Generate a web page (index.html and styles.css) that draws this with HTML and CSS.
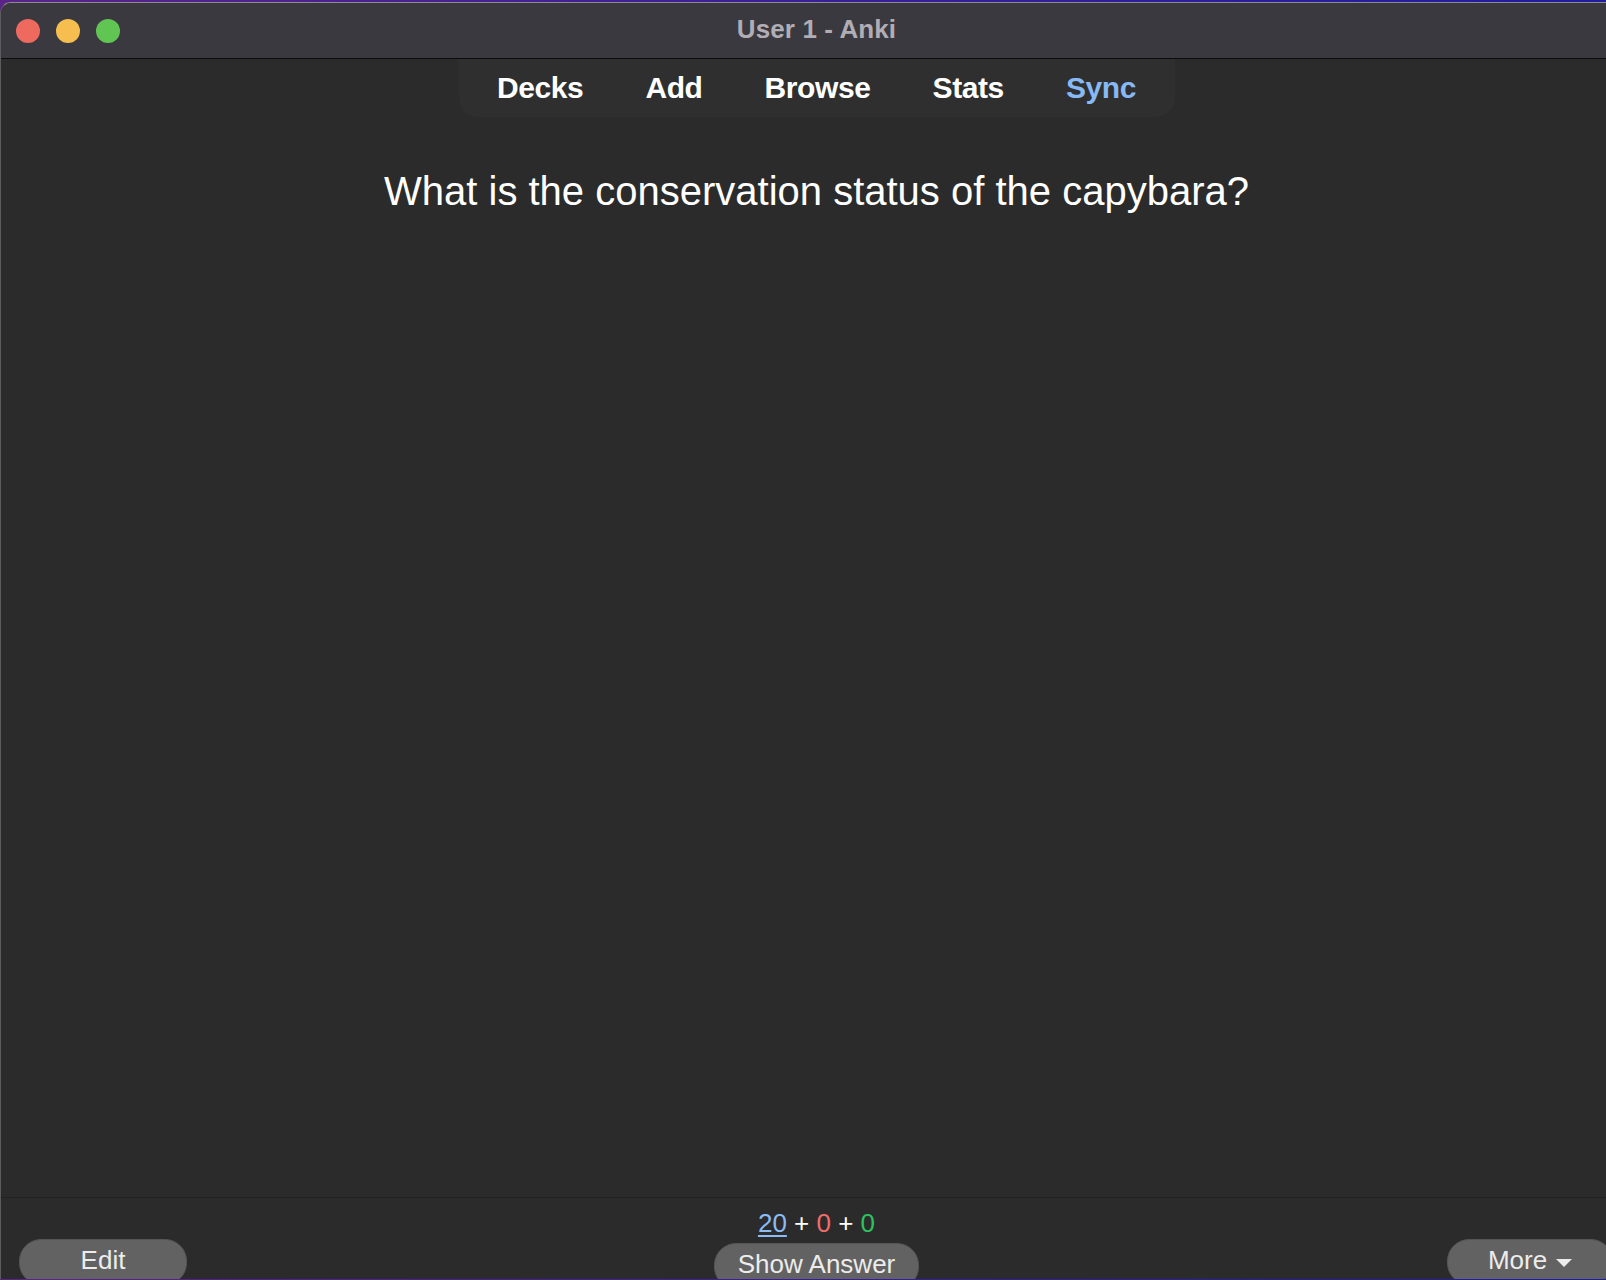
FILE: index.html
```html
<!DOCTYPE html>
<html lang="en">
<head>
<meta charset="utf-8">
<title>User 1 - Anki</title>
<link rel="stylesheet" href="styles.css">
</head>
<body>
<div class="window">
  <header class="titlebar">
    <div class="lights">
      <span class="light red"></span>
      <span class="light yellow"></span>
      <span class="light green"></span>
    </div>
    <div class="title">User 1 - Anki</div>
    <div class="spacer"></div>
  </header>
  <main class="main">
    <nav class="toolbar">
      <a class="tb-item">Decks</a>
      <a class="tb-item">Add</a>
      <a class="tb-item">Browse</a>
      <a class="tb-item">Stats</a>
      <a class="tb-item sync">Sync</a>
    </nav>
    <div class="card">What is the conservation status of the capybara?</div>
  </main>
  <footer class="bottombar">
    <div class="left">
      <button class="btn edit">Edit</button>
    </div>
    <div class="center">
      <div class="counts"><span class="new">20</span> + <span class="learn">0</span> + <span class="review">0</span></div>
      <button class="btn answer">Show Answer</button>
    </div>
    <div class="right">
      <button class="btn more">More <span class="caret"></span></button>
    </div>
  </footer>
</div>
</body>
</html>
```
FILE: styles.css
```css
html, body {
  margin: 0;
  padding: 0;
  height: 1280px;
  overflow: hidden;
}
body {
  background: linear-gradient(90deg, #5a2388 0%, #3a1f96 50%, #1f1c9e 100%);
  font-family: "Liberation Sans", Arial, sans-serif;
}
.window {
  width: 1632px;
  height: 1277px;
  margin-top: 2px;
  border-top: 1px solid #8c8b90;
  border-left: 1px solid #5c5c5f;
  border-radius: 11px 11px 0 0;
  overflow: hidden;
  display: flex;
  flex-direction: column;
  background: #2b2b2b;
  box-sizing: border-box;
}
.titlebar {
  height: 55px;
  flex: none;
  background: #3b3940;
  border-bottom: 1px solid #0c0c0e;
  display: grid;
  grid-template-columns: 1fr auto 1fr;
  align-items: center;
}
.lights {
  display: flex;
  gap: 16px;
  padding-left: 15px;
  padding-top: 1px;
}
.light {
  width: 24px;
  height: 24px;
  border-radius: 50%;
  display: block;
}
.red { background: #ee6a5f; }
.yellow { background: #f5be4f; }
.green { background: #61c554; }
.title {
  color: #b0adb5;
  font-weight: bold;
  font-size: 26px;
  letter-spacing: 0.1px;
  margin-top: -3px;
}
.main {
  flex: 1;
  display: flex;
  flex-direction: column;
  align-items: center;
  background: #2b2b2b;
}
.toolbar {
  width: 716px;
  height: 58px;
  box-sizing: border-box;
  background: #2f2f2f;
  border-radius: 0 0 20px 20px;
  display: flex;
  justify-content: center;
  align-items: center;
  gap: 62px;
  padding-bottom: 1px;
}
.tb-item {
  color: #ffffff;
  font-weight: bold;
  font-size: 30px;
  letter-spacing: -0.4px;
}
.tb-item.sync { color: #86b9f5; }
.card {
  margin-top: 51px;
  color: #ffffff;
  font-size: 40px;
  line-height: 46px;
  text-align: center;
}
.bottombar {
  height: 82px;
  flex: none;
  box-sizing: border-box;
  border-top: 1px solid #222222;
  background: #2b2b2b;
  display: grid;
  grid-template-columns: 1fr auto 1fr;
}
.btn {
  font-family: "Liberation Sans", Arial, sans-serif;
  font-size: 26px;
  line-height: 30px;
  color: #ececec;
  background: #626262;
  border: 1px solid #555555;
  border-radius: 22px;
  height: 46px;
  padding: 5px 0 0;
  box-sizing: border-box;
  display: flex;
  align-items: flex-start;
  justify-content: center;
}
.left { padding: 41px 0 0 18px; }
.edit { width: 168px; }
.center {
  display: flex;
  flex-direction: column;
  align-items: center;
  padding-top: 10px;
}
.counts {
  color: #ffffff;
  font-size: 26px;
  line-height: 30px;
}
.new { color: #8bbcf6; text-decoration: underline; text-underline-offset: 3px; }
.learn { color: #f26b6b; }
.review { color: #2ec15f; }
.answer {
  margin-top: 5px;
  width: 205px;
}
.right {
  display: flex;
  justify-content: flex-end;
  padding: 41px 19px 0 0;
}
.more {
  width: 166px;
  gap: 9px;
}
.caret {
  width: 0;
  height: 0;
  border-left: 8px solid transparent;
  border-right: 8px solid transparent;
  border-top: 8px solid #ececec;
  margin-top: 14px;
}
```
